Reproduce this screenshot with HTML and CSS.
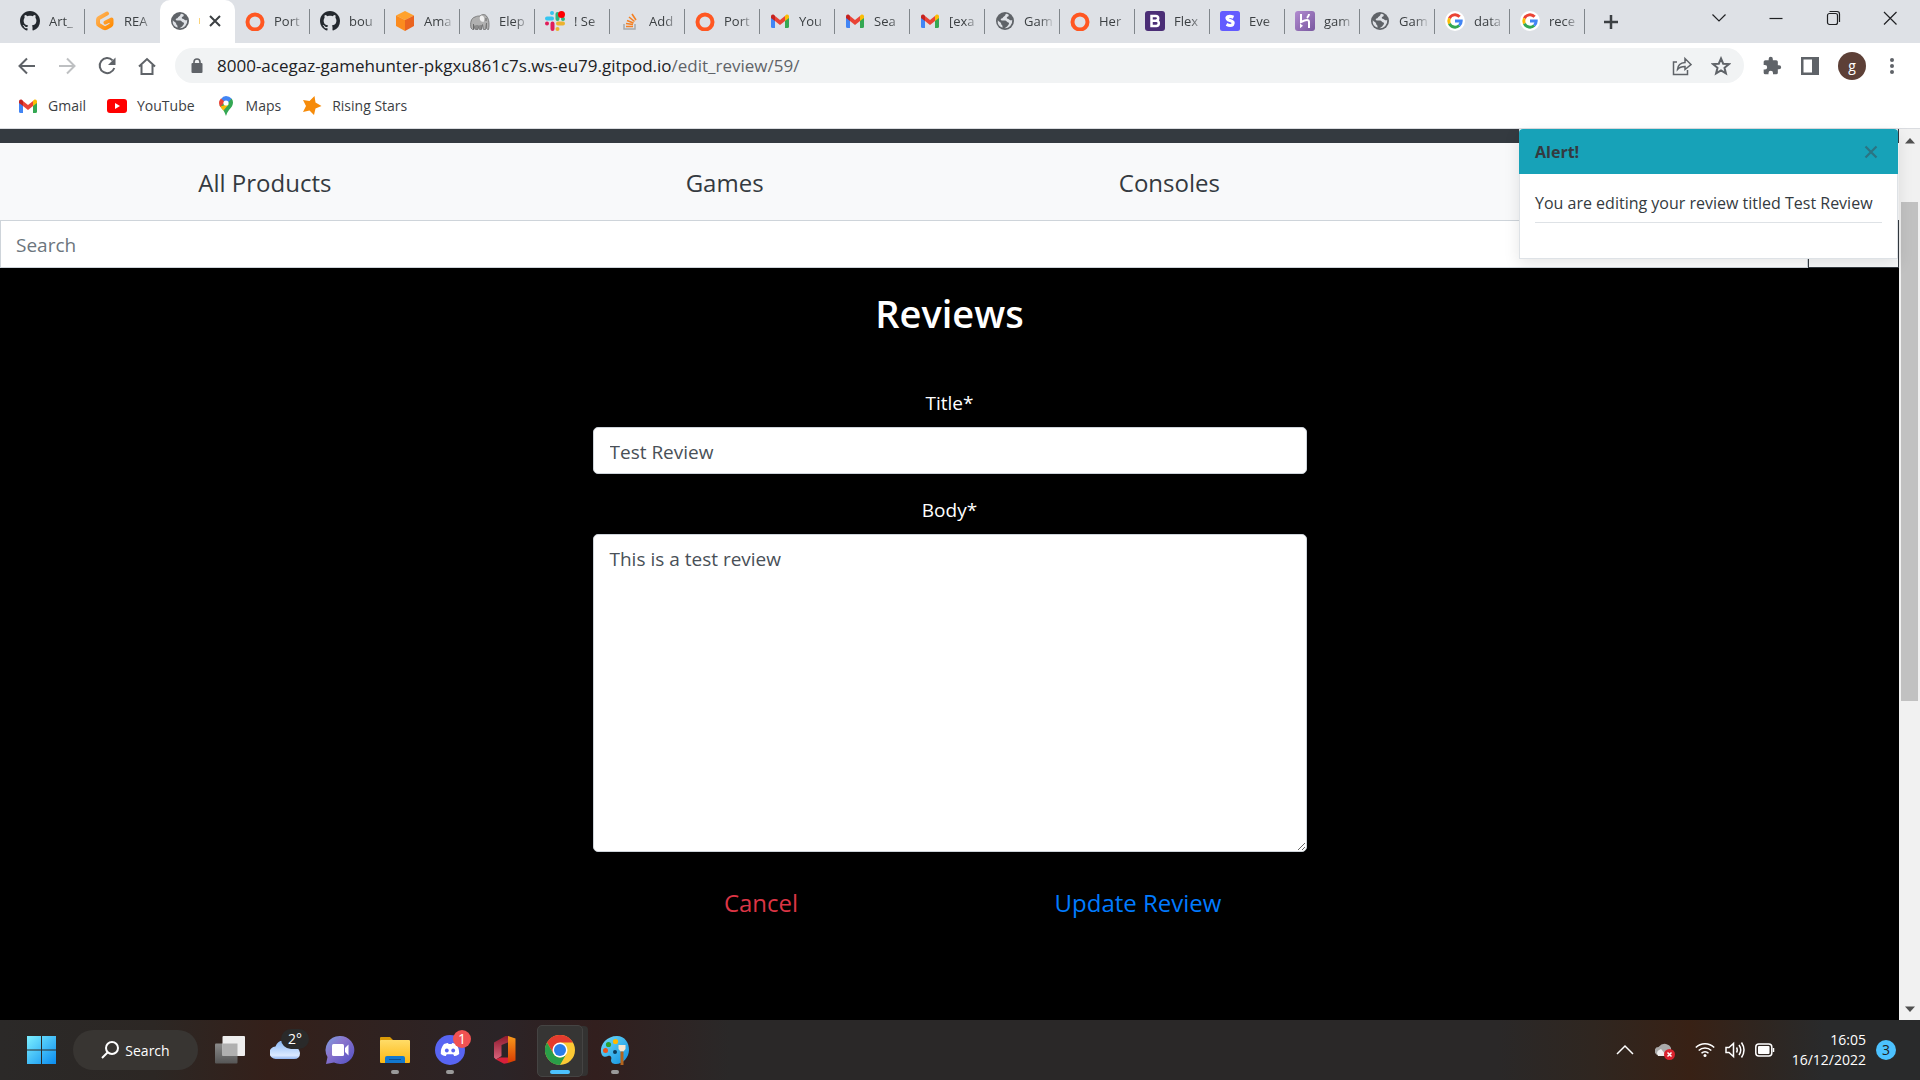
FILE: index.html
```html
<!DOCTYPE html>
<html lang="en">
<head>
<meta charset="utf-8">
<title>Game Hunter - Edit Review</title>
<link rel="stylesheet" href="styles.css">
</head>
<body>
<svg class="sprite" aria-hidden="true">
  <defs>
    <linearGradient id="gp" x1="0" y1="0" x2="1" y2="1"><stop offset="0" stop-color="#ffb45b"/><stop offset="1" stop-color="#ff8a00"/></linearGradient>
    <linearGradient id="win" x1="0" y1="0" x2="1" y2="1"><stop offset="0" stop-color="#7df0ff"/><stop offset="1" stop-color="#0a8cf0"/></linearGradient>
    <linearGradient id="cloud" x1="0" y1="0" x2="0" y2="1"><stop offset="0" stop-color="#8ab8f5"/><stop offset=".8" stop-color="#dbe9ff"/><stop offset="1" stop-color="#8fb4f0"/></linearGradient>
    <linearGradient id="chat" x1="0" y1="0" x2="1" y2="1"><stop offset="0" stop-color="#7aa0e0"/><stop offset=".4" stop-color="#8a74cc"/><stop offset="1" stop-color="#4f4fc4"/></linearGradient>
    <linearGradient id="fold" x1="0" y1="0" x2="0" y2="1"><stop offset="0" stop-color="#ffdc68"/><stop offset="1" stop-color="#fdb813"/></linearGradient>
    <linearGradient id="off" x1="0" y1="0" x2="0" y2="1"><stop offset="0" stop-color="#8e1a2e"/><stop offset="1" stop-color="#d9637c"/></linearGradient>
    <linearGradient id="off2" x1="0" y1="0" x2="0" y2="1"><stop offset="0" stop-color="#f79a1c"/><stop offset="1" stop-color="#d83b01"/></linearGradient>
    <linearGradient id="pal" x1="0" y1="0" x2="1" y2="1"><stop offset="0" stop-color="#6fdcfa"/><stop offset="1" stop-color="#0e8fe0"/></linearGradient>
    <linearGradient id="her" x1="0" y1="0" x2="1" y2="1"><stop offset="0" stop-color="#b18bd0"/><stop offset="1" stop-color="#79589f"/></linearGradient>
    <linearGradient id="tv" x1="0" y1="0" x2="0" y2="1"><stop offset="0" stop-color="#8a8a8a"/><stop offset="1" stop-color="#565656"/></linearGradient>
  </defs>
  <symbol id="github" viewBox="0 0 16 16"><path fill="#24292f" d="M8 0C3.58 0 0 3.58 0 8c0 3.54 2.29 6.53 5.47 7.59.4.07.55-.17.55-.38 0-.19-.01-.82-.01-1.49-2.01.37-2.53-.49-2.69-.94-.09-.23-.48-.94-.82-1.13-.28-.15-.68-.52-.01-.53.63-.01 1.08.58 1.23.82.72 1.21 1.87.87 2.33.66.07-.52.28-.87.51-1.07-1.78-.2-3.64-.89-3.64-3.95 0-.87.31-1.59.82-2.15-.08-.2-.36-1.02.08-2.12 0 0 .67-.21 2.2.82.64-.18 1.32-.27 2-.27s1.36.09 2 .27c1.53-1.04 2.2-.82 2.2-.82.44 1.1.16 1.92.08 2.12.51.56.82 1.27.82 2.15 0 3.07-1.87 3.75-3.65 3.95.29.25.54.73.54 1.48 0 1.07-.01 1.93-.01 2.2 0 .21.15.46.55.38A8 8 0 0 0 16 8c0-4.42-3.58-8-8-8z"/></symbol>
  <symbol id="gitpod" viewBox="0 0 20 20"><path fill="none" stroke="url(#gp)" stroke-width="4" stroke-linecap="round" stroke-linejoin="round" d="M12 2.600L4 7q-1 .6-1 1.700V12.500q0 1 1 1.500l5 3q1 .5 2 0l4.500-2.500q1-.6 1-1.500V8.500L10.500 11.500"/></symbol>
  <symbol id="globe" viewBox="0 0 20 20"><circle cx="10" cy="10" r="9" fill="#5f6368"/><path fill="#dee1e6" d="M11 2.800c-1 1.200-.4 2-2 2.600-1.300.5-1 1.800-2.500 2.200-1.300.4-1 1.900.6 2h3c1.500.1 1.500 1.500 2.500 1.600 1.500.2 1.800 1 1 2.200-.7 1-1 1.800-2.200 2.500-.8.5-1.400.9-2 1.300A7.300 7.300 0 0 0 17.200 9c-1 .6-2.200.3-3-.6-1-.9-2.200-.3-2.400-1.500-.2-1.300 1.300-1 1.800-1.900.3-.5 0-1.100-.1-1.500A7 7 0 0 0 11 2.800zM2.800 9c.7 1.500 1.900 1.600 2.700 2.400 1 1 .4 1.800 1.300 2.500 1 .7.600 1.800.7 2.900A7.200 7.200 0 0 1 2.800 9z"/></symbol>
  <symbol id="ring" viewBox="0 0 20 20"><circle cx="10" cy="11" r="7.500" fill="none" stroke="#ff5722" stroke-width="4"/></symbol>
  <symbol id="cube" viewBox="0 0 20 20"><path fill="#ffa22e" d="M10 0l9 4.500-9 4.500-9-4.500z"/><path fill="#fb8b1e" d="M1 4.500L10 9v11l-9-5z"/><path fill="#ea6420" d="M19 4.500L10 9v11l9-5z"/></symbol>
  <symbol id="elephant" viewBox="0 0 20 20"><path fill="#b0b0b0" stroke="#6c6c6c" stroke-width=".8" d="M1 17c-1-5 0-10 4-11 2-1 3-1 5-1 2-2 6-2 7 1 2 2 2.500 8 1.500 12.500q-1.500 0-2-1V12l-1 6.500h-2l-1-5-1 5H9.500l-.5-4-1 4H5.500l-.5-4-1 4H2.500z"/><path fill="#f0f0f0" d="M10 5.500c2-3 6 1 3.500 5.500-3 0-4.500-3-3.500-5.500z"/><path stroke="#555" stroke-width=".8" d="M3.500 13v5M7 14v4M11 14v4M16 7v3"/></symbol>
  <symbol id="slack" viewBox="0 0 20 20"><g stroke-width="4" stroke-linecap="round"><path stroke="#36c5f0" d="M2 7.500h5M7 2v0"/><path stroke="#2eb67d" d="M12.500 3v5M18 8v0"/><path stroke="#e01e5a" d="M7.500 12.500V18M2 12.500v0"/><path stroke="#ecb22e" d="M13 12.500h5M12.500 18v0"/></g><circle cx="16.500" cy="3.500" r="3.500" fill="red"/></symbol>
  <symbol id="stack" viewBox="0 0 20 20"><path fill="none" stroke="#a6a9ac" stroke-width="1.500" d="M4 13v5h11v-5"/><path stroke="#f48024" stroke-width="1.600" d="M6 15.500h7M6 12.500l7 1M7 9.500l6.500 2.500M9 6l5.500 4.500M12 3l4 6"/></symbol>
  <symbol id="gmail" viewBox="0 0 20 20"><path fill="#4285f4" d="M1 5v10.500Q1 17 2.500 17H5V8z"/><path fill="#34a853" d="M19 5v10.500q0 1.500-1.500 1.500H15V8z"/><path fill="#ea4335" d="M5 5l5 4 5-4v5l-5 4-5-4z"/><path fill="#c5221f" d="M1 5.500Q1 3 3.500 3.500L5 4.800V10L1 7z"/><path fill="#fbbc04" d="M19 5.500Q19 3 16.500 3.500L15 4.800V10l4-3z"/></symbol>
  <symbol id="boots" viewBox="0 0 20 20"><rect width="20" height="20" rx="3" fill="#4b2e76"/><path fill="none" stroke="#fff" stroke-width="2.500" d="M6.500 5h4.200q2.500 0 2.500 2.300T10.700 9.700H6.500h4.800q2.500 0 2.500 2.600T11.300 15H6.500z"/></symbol>
  <symbol id="stripe" viewBox="0 0 20 20"><rect width="20" height="20" rx="2.500" fill="#635bff"/><path fill="none" stroke="#fff" stroke-width="3.200" d="M13.500 6.300Q10 4.800 8 5.700C6 7 7.500 8.800 10 9.500c3 .8 4 2.500 2.700 4-1.500 1.500-4 1-6.200-.1"/></symbol>
  <symbol id="heroku" viewBox="0 0 20 20"><rect width="20" height="20" rx="3" fill="url(#her)"/><path fill="none" stroke="#fff" stroke-width="2" d="M6 3v8q8-4 8 0v6M14 3q0 2-2 4"/><path fill="#fff" d="M5 12.500l3 2.300-3 2.500z"/></symbol>
  <symbol id="google" viewBox="0 0 20 20"><circle cx="10" cy="10" r="10" fill="#fff"/><g fill="none" stroke-width="3"><path stroke="#ea4335" d="M4.400 7.400A6.200 6.200 0 0 1 14.600 5.800"/><path stroke="#fbbc05" d="M4.400 12.600a6.200 6.200 0 0 1 0-5.200"/><path stroke="#34a853" d="M4.400 12.600A6.200 6.200 0 0 0 14.200 14.500"/><path stroke="#4285f4" d="M14.200 14.500A6.200 6.200 0 0 0 16.200 10H10"/></g></symbol>
  <symbol id="close" viewBox="0 0 20 20"><path stroke="currentColor" stroke-width="2" d="M5 5l10 10M15 5L5 15"/></symbol>
  <symbol id="chrome" viewBox="0 0 30 30"><circle cx="15" cy="15" r="15" fill="#fcc934"/><path fill="#e33b2e" d="M2 7.500a15 15 0 0 1 26 0H15L8.500 18.750z"/><path fill="#2a9e48" d="M2 7.500L8.500 18.750A7.500 7.500 0 0 0 21.500 18.750L15 30A15 15 0 0 1 2 7.500z"/><circle cx="15" cy="15" r="7.500" fill="#fff"/><circle cx="15" cy="15" r="6" fill="#2a7de8"/></symbol>
</svg>

<header class="browser">
  <div class="tabstrip">
    <div class="tabs">
      <button class="tab"><svg class="fav"><use href="#github"/></svg><span>Art_</span></button>
      <button class="tab plain"><svg class="fav"><use href="#gitpod"/></svg><span>REA</span></button>
      <button class="tab active" aria-label="Game Hunter"><svg class="fav"><use href="#globe"/></svg><i class="sliver"></i><svg class="tab-close"><use href="#close"/></svg></button>
      <button class="tab"><svg class="fav"><use href="#ring"/></svg><span>Port</span></button>
      <button class="tab"><svg class="fav"><use href="#github"/></svg><span>bou</span></button>
      <button class="tab"><svg class="fav"><use href="#cube"/></svg><span>Ama</span></button>
      <button class="tab"><svg class="fav"><use href="#elephant"/></svg><span>Elep</span></button>
      <button class="tab"><svg class="fav"><use href="#slack"/></svg><span>! Se</span></button>
      <button class="tab"><svg class="fav"><use href="#stack"/></svg><span>Add</span></button>
      <button class="tab"><svg class="fav"><use href="#ring"/></svg><span>Port</span></button>
      <button class="tab"><svg class="fav"><use href="#gmail"/></svg><span>You</span></button>
      <button class="tab"><svg class="fav"><use href="#gmail"/></svg><span>Sea</span></button>
      <button class="tab"><svg class="fav"><use href="#gmail"/></svg><span>[exa</span></button>
      <button class="tab"><svg class="fav"><use href="#globe"/></svg><span>Gam</span></button>
      <button class="tab"><svg class="fav"><use href="#ring"/></svg><span>Her</span></button>
      <button class="tab"><svg class="fav"><use href="#boots"/></svg><span>Flex</span></button>
      <button class="tab"><svg class="fav"><use href="#stripe"/></svg><span>Eve</span></button>
      <button class="tab"><svg class="fav"><use href="#heroku"/></svg><span>gam</span></button>
      <button class="tab"><svg class="fav"><use href="#globe"/></svg><span>Gam</span></button>
      <button class="tab"><svg class="fav"><use href="#google"/></svg><span>data</span></button>
      <button class="tab"><svg class="fav"><use href="#google"/></svg><span>rece</span></button>
      <button class="new-tab" aria-label="New tab"><svg width="16" height="16" viewBox="0 0 16 16"><path stroke="#3c4043" stroke-width="2.500" d="M8 1v14M1 8h14"/></svg></button>
    </div>
    <div class="window-controls">
      <button aria-label="Search tabs"><svg viewBox="0 0 16 16"><path d="M1.500 4.500L8 11l6.500-6.500"/></svg></button>
      <button aria-label="Minimize"><svg viewBox="0 0 16 16"><path d="M1.500 8.500h13"/></svg></button>
      <button aria-label="Restore"><svg viewBox="0 0 16 16"><rect x="2.500" y="3.500" width="10" height="11" rx="2"/><path d="M4.500 1.500H12Q14.500 1.500 14.500 4v8"/></svg></button>
      <button aria-label="Close"><svg viewBox="0 0 16 16"><path d="M2 2l12.500 12.500M14.500 2L2 14.500"/></svg></button>
    </div>
  </div>

  <div class="toolbar">
    <div class="nav-buttons">
      <button aria-label="Back"><svg viewBox="0 0 20 20"><path d="M18 10H3M10 2.500L2.500 10l7.500 7.500"/></svg></button>
      <button aria-label="Forward" class="disabled"><svg viewBox="0 0 20 20"><path d="M2 10h15M10 2.500l7.500 7.500-7.500 7.500"/></svg></button>
      <button aria-label="Reload"><svg viewBox="0 0 20 20"><path d="M15.600 4.400A7.500 7.500 0 1 0 17.300 12"/><path class="solid" d="M18.500 1.500V9H11z"/></svg></button>
      <button aria-label="Home"><svg viewBox="0 0 20 20"><path d="M2 10.500L10 3l8 7.500M4.500 9v9h11V9"/></svg></button>
    </div>
    <div class="omnibox">
      <svg class="lock" width="12" height="16" viewBox="0 0 12 16"><rect x="0.500" y="5" width="11" height="10" rx="1" fill="#5f6368"/><path d="M3 6V4a3 3 0 0 1 6 0v2" fill="none" stroke="#5f6368" stroke-width="1.600"/></svg>
      <p class="url">8000-acegaz-gamehunter-pkgxu861c7s.ws-eu79.gitpod.io<span>/edit_review/59/</span></p>
      <button aria-label="Share"><svg viewBox="0 0 20 20"><path class="thin" d="M5 6H1.500v12.500h14V14M5.500 13.500Q6 7 13 6.500V2.500L19 8.500l-6 5V10.500Q8 10.500 5.500 13.500z"/></svg></button>
      <button aria-label="Bookmark"><svg viewBox="0 0 20 20"><path d="M10 2.500l2.200 5.200 5.800.4-4.500 3.700 1.400 5.600-4.900-3-4.900 3 1.400-5.600L2 8.100l5.800-.4z"/></svg></button>
    </div>
    <div class="actions">
      <button aria-label="Extensions"><svg viewBox="0 0 24 24"><path class="fill" d="M20.500 11H19V7a2 2 0 0 0-2-2h-4V3.500a2.500 2.500 0 0 0-5 0V5H4a2 2 0 0 0-2 2v3.800h1.500a2.700 2.700 0 0 1 0 5.400H2V20a2 2 0 0 0 2 2h3.800v-1.500a2.700 2.700 0 0 1 5.400 0V22H17a2 2 0 0 0 2-2v-4h1.500a2.500 2.500 0 0 0 0-5z"/></svg></button>
      <button aria-label="Side panel"><svg viewBox="0 0 20 20"><path class="fill" fill-rule="evenodd" d="M1 1h18v18H1zM3.500 3.500v13H12v-13z"/></svg></button>
      <button class="avatar">g</button>
      <button aria-label="Menu"><svg class="dots" viewBox="0 0 16 20"><g class="fill"><circle cx="8" cy="4" r="2"/><circle cx="8" cy="10" r="2"/><circle cx="8" cy="16" r="2"/></g></svg></button>
    </div>
  </div>

  <nav class="bookmarks" aria-label="Bookmarks">
    <a href="#"><svg><use href="#gmail"/></svg>Gmail</a>
    <a href="#"><svg viewBox="0 0 20 20"><rect y="3" width="20" height="14" rx="3" fill="red"/><path fill="#fff" d="M8 7l5 3-5 3z"/></svg>YouTube</a>
    <a href="#"><svg viewBox="0 0 20 20"><path fill="#34a853" d="M3.500 9Q5 12 7.500 14.500 9 17 10 20q1-3.500 3-6 4-4 4-7.500Q17 4 15.500 2.500z"/><path fill="#fbbc04" d="M4.200 10.500L13 8l-5.500 6.500Q5.500 12.500 4.200 10.500z"/><path fill="#4285f4" d="M15.500 2.500L10 9 5 3Q7 0 10 0q3.500 0 5.500 2.500z"/><path fill="#ea4335" d="M5 2.500L9 6 4.200 11Q3 8.500 3 7q0-2.500 2-4.500z"/><circle cx="10" cy="7" r="2.600" fill="#fff"/></svg>Maps</a>
    <a href="#"><svg viewBox="0 0 20 20"><path fill="#f68b0a" d="M12.500 0l1 6.500 6 3.500-6 2.500-1.500 6.500-4.500-4.500L1 16l3-6L1 4l6.500 1z"/></svg>Rising Stars</a>
  </nav>
</header>

<div class="viewport">
  <div class="page">
    <div class="topbar"></div>
    <nav class="categories" aria-label="Categories">
      <a href="#">All Products</a>
      <a href="#">Games</a>
      <a href="#">Consoles</a>
    </nav>
    <form class="search">
      <input type="search" placeholder="Search" aria-label="Search">
      <button type="button" aria-label="Submit search"></button>
    </form>

    <main>
      <h1>Reviews</h1>
      <form class="review">
        <label for="title">Title*</label>
        <input id="title" type="text" value="Test Review">
        <label for="body">Body*</label>
        <textarea id="body">This is a test review</textarea>
        <div class="form-actions">
          <a href="#" class="cancel">Cancel</a>
          <button type="button" class="update">Update Review</button>
        </div>
      </form>
    </main>

    <section class="toast" role="alert">
      <div class="toast-head"><strong>Alert!</strong><button aria-label="Dismiss"><svg><use href="#close"/></svg></button></div>
      <div class="toast-body"><p>You are editing your review titled Test Review</p></div>
    </section>
  </div>
  <div class="scrollbar">
    <svg viewBox="0 0 10 6"><path d="M0 5.500L5 0l5 5.500z"/></svg>
    <div class="track"><div class="thumb"></div></div>
    <svg viewBox="0 0 10 6"><path d="M0 .5L5 6l5-5.500z"/></svg>
  </div>
</div>

<footer class="taskbar">
  <div class="apps">
    <button class="app start" aria-label="Start"><svg viewBox="0 0 30 30"><path fill="url(#win)" d="M0 1h14v13.500H0zM15 1h14v13.500H15zM0 15.500h14V29H0zM15 15.500h14V29H15z"/></svg></button>
    <button class="task-search"><svg width="18" height="18" viewBox="0 0 18 18"><circle cx="11" cy="7" r="6"/><path d="M6.500 11.500L1 17"/></svg>Search</button>
    <button class="app" aria-label="Task view"><svg viewBox="0 0 30 30"><rect y="8.500" width="22.500" height="20" rx="1" fill="url(#tv)"/><rect x="7.500" y="1" width="22.500" height="20" rx="1" fill="#eee"/><path fill="#b0b0b0" d="M7.500 8.500h15V21h-15z"/></svg></button>
    <button class="app" aria-label="Weather"><svg viewBox="0 0 30 30"><path fill="url(#cloud)" d="M6 24a6 6 0 0 1-.5-12.500Q8 5 14 6t8 6q7-1 8 6 0 6-6 6z"/></svg><span class="temp">2°</span></button>
    <button class="app" aria-label="Chat"><svg viewBox="0 0 30 30"><path fill="url(#chat)" d="M15 1a14 14 0 1 1-6 26.500L1 29l1.500-7A14 14 0 0 1 15 1z"/><rect x="7" y="9" width="12" height="12" rx="1.500" fill="#fff"/><path fill="#fff" d="M20 13l3.500-3.500v11L20 17z"/></svg></button>
    <button class="app open" aria-label="File Explorer"><svg viewBox="0 0 30 30"><path fill="#d99a08" d="M0 3q0-1 1-1h9l3 3v6H0z"/><rect y="5" width="30" height="23" rx="1" fill="url(#fold)"/><path fill="#1278cf" d="M5 28v-5q0-2 2-2h16q2 0 2 2v5z"/><path stroke="#0b4f94" d="M9 24.500h12"/></svg></button>
    <button class="app open" aria-label="Discord"><svg viewBox="0 0 30 30"><circle cx="15" cy="15" r="15" fill="#5865f2"/><path fill="#fff" d="M9 9q3-1 4-1l.6 1h3l.6-1q1 0 4 1 3 4 3 10-3 2.500-5 2l-1-1.700h-6.500L10.800 21q-2 .5-5-2Q5.500 13 9 9z"/><circle cx="11.800" cy="15.500" r="1.900" fill="#5865f2"/><circle cx="18.200" cy="15.500" r="1.900" fill="#5865f2"/></svg><span class="count">1</span></button>
    <button class="app" aria-label="Office"><svg viewBox="0 0 30 30"><path fill="url(#off)" d="M4 7.500L15.500 1H19v6l-7.500 3v11L6 24.500l-2-2z"/><path fill="url(#off2)" d="M18 1l7.500 2.500v22L18 28z"/><path fill="#d8203a" d="M6 24.500l4-2h8V28l-4 .8z"/></svg></button>
    <button class="app current" aria-label="Chrome"><svg><use href="#chrome"/></svg></button>
    <button class="app open" aria-label="Paint"><svg viewBox="0 0 30 30"><path fill="url(#pal)" d="M17 1C7 1 0 9 1 17c1 6 5 5 7 4 3-1 4 2 3 4 0 3 2 4 5 4 7 0 13-7 13-14S25 1 17 1z"/><circle cx="15.500" cy="6.500" r="2.600" fill="#ffb900"/><circle cx="8.500" cy="9.500" r="2.600" fill="#2ca02c"/><circle cx="5.500" cy="15.500" r="2.500" fill="#e8541c"/><circle cx="15" cy="17" r="2" fill="#0c3c5a"/><path fill="#f5e6d0" d="M18.500 10h7v4l-2 2.500h-3l-2-2.500z"/><path stroke="#b5651d" stroke-width="3" d="M22 16.500V30"/></svg></button>
  </div>
  <div class="tray">
    <svg viewBox="0 0 20 20"><path d="M2 14l8-8 8 8"/></svg>
    <svg viewBox="0 0 20 20"><path fill="#aaa" stroke="none" d="M4 15a4 4 0 0 1-.5-8Q7 3 11 4q4 1 5 4v7z"/><path fill="#eee" stroke="none" d="M3 16q-3-5 3-7l6 7z"/><circle cx="14.500" cy="14.500" r="5.500" fill="#d9232e" stroke="none"/><path d="M12.500 12.500l4 4M16.500 12.500l-4 4"/></svg>
    <svg viewBox="0 0 20 20"><path d="M.8 7.500a13 13 0 0 1 18.400 0M3.700 10.500a9 9 0 0 1 12.600 0M6.500 13.300a5 5 0 0 1 7 0"/><circle cx="10" cy="15.500" r="1.500" fill="#fff" stroke="none"/></svg>
    <svg viewBox="0 0 20 20"><path d="M1 7.500h3L8.500 3.500v13L4 12.500H1zM11.500 7.500q1.500 2.500 0 5M14 5q3.500 5 0 10M16.500 2.500q5 7.500 0 15"/></svg>
    <svg viewBox="0 0 20 20"><rect x=".8" y="4" width="16" height="12" rx="3"/><rect x="3" y="6" width="11.500" height="8" rx="1" fill="#fff" stroke="none"/><path d="M18.500 8v4"/></svg>
    <div class="clock"><time>16:05</time><time>16/12/2022</time></div>
    <span class="notify">3</span>
  </div>
</footer>
</body>
</html>
```
FILE: styles.css
```css
* { box-sizing: border-box; }

body {
  margin: 0;
  min-height: 100vh;
  display: flex;
  flex-direction: column;
  font-family: "Open Sans", "Noto Sans", sans-serif;
  font-size: 14px;
  color: #3c4043;
  background: #000;
}

button { padding: 0; border: 0; background: none; font: inherit; color: inherit; }
a { color: inherit; text-decoration: none; }
p { margin: 0; }
svg { display: block; flex: none; }
.sprite { position: absolute; width: 0; height: 0; }

/* Browser chrome */
.browser { background: #fff; border-bottom: 1px solid #dadce0; }
.tabstrip { display: flex; justify-content: space-between; height: 43px; background: #dee1e6; }
.tabs { display: flex; padding-left: 10px; }
.tab { position: relative; display: flex; align-items: center; gap: 9px; width: 75px; padding: 0 5px 2px 10px; }
.tab::after { content: ""; position: absolute; right: 0; top: 9px; width: 1px; height: 25px; background: #80868b; }
.tab.plain::after, .tab.active::after { display: none; }
.fav { width: 20px; height: 20px; }
.tab span {
  flex: 1;
  font-size: 13px;
  white-space: nowrap;
  text-align: left;
  -webkit-mask-image: linear-gradient(to right, #000 50%, transparent);
  mask-image: linear-gradient(to right, #000 50%, transparent);
}
.tab.active { background: #fff; border-radius: 10px 10px 0 0; }
.sliver { width: 1px; height: 6px; background: #fbd37a; }
.tab-close { width: 20px; height: 20px; margin-left: -4px; }
.new-tab { display: flex; align-items: center; margin-left: 18px; }
.window-controls { display: flex; height: 36px; padding-right: 2px; }
.window-controls button { display: grid; place-items: center; width: 57px; }
.window-controls svg { width: 16px; height: 16px; fill: none; stroke: #202124; stroke-width: 1.2; }

.toolbar { display: flex; align-items: center; height: 45px; padding: 0 20px 0 17px; }
.toolbar button { display: grid; place-items: center; }
.toolbar svg { fill: none; stroke: #5f6368; stroke-width: 2; }
.toolbar button svg { width: 20px; height: 20px; }
.toolbar button .dots { width: 16px; }
.toolbar .fill { fill: #5f6368; stroke: none; }
.toolbar .solid { fill: #5f6368; stroke: none; }
.toolbar .thin { stroke-width: 1.5; }
.nav-buttons { display: flex; gap: 20px; margin-right: 18px; }
.nav-buttons .disabled { opacity: .4; }
.omnibox { flex: 1; display: flex; align-items: center; gap: 19px; height: 35px; padding: 0 13px 0 16px; border-radius: 18px; background: #f1f3f4; }
.omnibox .lock { margin-right: -5px; }
.omnibox .lock path { stroke-width: 1.6; }
.omnibox .lock rect { stroke: none; }
.url { flex: 1; font-size: 17px; color: #202124; }
.url span { color: #5f6368; }
.actions { display: flex; align-items: center; gap: 18px; margin-left: 18px; }
.toolbar .avatar { width: 28px; height: 28px; border-radius: 50%; background: #5d4037; color: #fff; }

.bookmarks { display: flex; align-items: center; gap: 21px; height: 40px; padding: 0 18px 5px; }
.bookmarks a { display: flex; align-items: center; gap: 10px; }
.bookmarks svg { width: 20px; height: 20px; }

/* Web page */
.viewport { flex: 1; display: flex; }
.page { position: relative; flex: 1; font-size: 19px; color: #343a40; }
.topbar { height: 14px; background: #343a40; }
.categories { display: grid; grid-template-columns: 53fr 39fr 50fr 48fr; align-items: center; height: 77px; padding-top: 2px; background: #f8f9fa; font-size: 24px; text-align: center; }
.search { display: flex; height: 48px; }
.search input { flex: 1; padding: 2px 15px 0; border: 1px solid #ced4da; background: #fff; font: inherit; }
.search input::placeholder { color: #6c757d; opacity: 1; }
.search button { width: 91px; border: 1px solid #343a40; background: #f8f9fa; }

main { padding: 19px 0 24px; }
h1 { margin: 0 0 49px; font-size: 38px; line-height: 52px; font-weight: 600; text-align: center; color: #fff; }
.review { width: 714px; max-width: 90%; margin: 0 auto; }
.review label { display: block; margin-bottom: 9px; line-height: 30px; text-align: center; color: #fff; }
.review input, .review textarea { display: block; width: 100%; border: 1px solid #ced4da; border-radius: 5px; background: #fff; color: #495057; font: inherit; line-height: 30px; }
.review input { height: 47px; padding: 2px 16px 0; margin-bottom: 21px; }
.review textarea { height: 318px; padding: 9px 16px; }
.form-actions { display: grid; grid-template-columns: 1fr 1fr; margin: 33px -20px 0; font-size: 24px; line-height: 36px; text-align: center; }
.cancel { color: #dc3545; }
.update { color: #007bff; }

.toast { position: absolute; top: 0; right: 1px; min-width: 379px; border: 1px solid #dee2e6; border-top: 0; background: #fff; font-size: 16px; box-shadow: 0 5px 15px rgba(0, 0, 0, .1); }
.toast-head { display: flex; align-items: center; justify-content: space-between; height: 45px; margin: 0 -1px; padding: 0 16px; border-radius: 4px 4px 0 0; background: #17a2b8; }
.toast-head svg { width: 22px; height: 22px; color: #2b7482; }
.toast-body { padding: 15px 15px 35px; }
.toast-body p { padding-bottom: 4px; border-bottom: 1px solid #dee2e6; line-height: 29px; }

.scrollbar { display: flex; flex-direction: column; align-items: center; width: 21px; padding: 9px 0 8px; background: #f1f1f1; }
.scrollbar svg { width: 10px; height: 6px; fill: #505050; }
.track { flex: 1; width: 17px; padding: 58px 0 0; }
.thumb { height: 499px; background: #c1c1c1; }

/* Taskbar */
.taskbar { display: flex; justify-content: space-between; height: 60px; padding: 0 24px 0 14px; color: #fff; background: linear-gradient(to right, #2b2928 0%, #2c2724 8%, #34201a 14%, #2b2427 26%, #321f1e 31%, #2a2828 38%, #2a2828 78%, #2f2620 83%, #382115 88%, #2e2621 92%, #292a2b 95%); }
.apps, .tray { display: flex; align-items: center; }
.app { position: relative; display: grid; place-items: center; width: 55px; height: 50px; }
.app svg { width: 30px; height: 30px; }
.task-search { display: flex; align-items: center; justify-content: center; gap: 6px; width: 125px; height: 40px; margin: 0 4px; border-radius: 20px; background: #383532; }
.task-search svg { fill: none; stroke: #fff; stroke-width: 2; }
.temp { position: absolute; right: 3px; top: 4px; width: 28px; border-radius: 10px; background: #2a2a2a; line-height: 20px; text-align: center; }
.count { position: absolute; right: 6px; top: 5px; width: 18px; border-radius: 50%; background: #f05252; line-height: 18px; text-align: center; }
.open::after, .current::after { content: ""; position: absolute; left: 24px; bottom: 1px; width: 8px; height: 4px; border-radius: 2px; background: #9a9a9a; }
.current::before { content: ""; position: absolute; left: 5px; top: 0; width: 44px; height: 50px; border: 1px solid #454443; border-radius: 5px; background: #363534; box-shadow: 6px 0 0 -1px #333231; }
.current svg { position: relative; }
.current::after { left: 18px; width: 20px; background: #4cc2ff; }
.tray svg { width: 20px; height: 20px; margin-right: 10px; fill: none; stroke: #fff; stroke-width: 1.5; }
.tray svg:nth-child(-n+2) { margin-right: 20px; }
.clock { display: flex; flex-direction: column; width: 81px; line-height: 20px; text-align: right; }
.notify { width: 20px; margin-left: 10px; border-radius: 50%; background: #4cc2ff; color: #202020; line-height: 20px; text-align: center; }
```
